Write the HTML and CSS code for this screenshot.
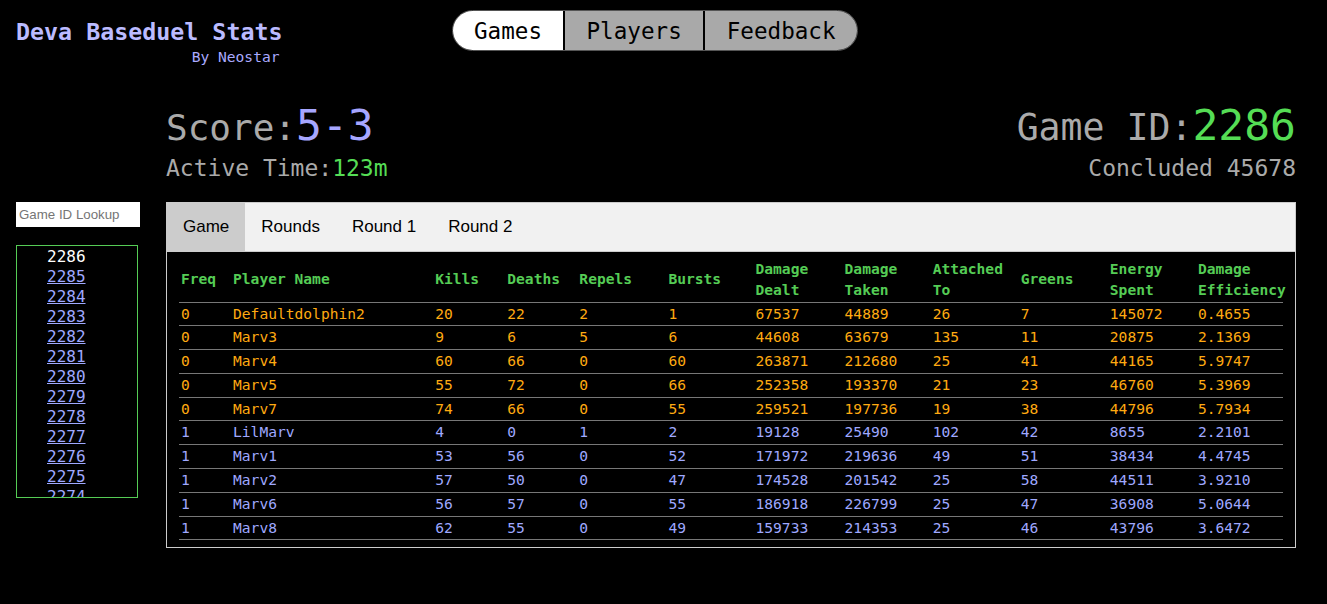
FILE: index.html
```html
<!DOCTYPE html>
<html lang="en">
<head>
<meta charset="utf-8">
<title>Deva Baseduel Stats</title>
<link rel="stylesheet" href="styles.css">
</head>
<body>
<header class="topbar">
  <div class="brand">
    <div class="brand-title">Deva Baseduel Stats</div>
    <div class="brand-sub">By Neostar</div>
  </div>
  <nav class="pill-nav">
    <button class="pill active">Games</button>
    <button class="pill">Players</button>
    <button class="pill">Feedback</button>
  </nav>
</header>

<main class="layout">
  <section class="summary">
    <div class="summary-left">
      <div class="big-line"><span class="label">Score:</span><span class="val-blue">5-3</span></div>
      <div class="small-line">Active Time:<span class="val-green">123m</span></div>
    </div>
    <div class="summary-right">
      <div class="big-line"><span class="label">Game ID:</span><span class="val-green">2286</span></div>
      <div class="small-line">Concluded 45678</div>
    </div>
  </section>

  <aside class="sidebar">
    <input class="lookup" type="text" placeholder="Game ID Lookup">
    <ul class="game-list">
      <li class="current">2286</li>
      <li><a href="#">2285</a></li>
      <li><a href="#">2284</a></li>
      <li><a href="#">2283</a></li>
      <li><a href="#">2282</a></li>
      <li><a href="#">2281</a></li>
      <li><a href="#">2280</a></li>
      <li><a href="#">2279</a></li>
      <li><a href="#">2278</a></li>
      <li><a href="#">2277</a></li>
      <li><a href="#">2276</a></li>
      <li><a href="#">2275</a></li>
      <li><a href="#">2274</a></li>
      <li><a href="#">2273</a></li>
      <li><a href="#">2272</a></li>
    </ul>
  </aside>

  <section class="panel">
    <div class="tabs">
      <button class="tab active">Game</button>
      <button class="tab">Rounds</button>
      <button class="tab">Round 1</button>
      <button class="tab">Round 2</button>
    </div>
    <div class="tab-content">
      <table class="stats">
        <thead>
          <tr>
            <th class="c-freq">Freq</th>
            <th class="c-name">Player Name</th>
            <th class="c-kills">Kills</th>
            <th class="c-deaths">Deaths</th>
            <th class="c-repels">Repels</th>
            <th class="c-bursts">Bursts</th>
            <th class="c-dealt">Damage Dealt</th>
            <th class="c-taken">Damage Taken</th>
            <th class="c-att">Attached To</th>
            <th class="c-greens">Greens</th>
            <th class="c-energy">Energy Spent</th>
            <th class="c-eff">Damage Efficiency</th>
          </tr>
        </thead>
        <tbody>
          <tr class="team0"><td>0</td><td>Defaultdolphin2</td><td>20</td><td>22</td><td>2</td><td>1</td><td>67537</td><td>44889</td><td>26</td><td>7</td><td>145072</td><td>0.4655</td></tr>
          <tr class="team0"><td>0</td><td>Marv3</td><td>9</td><td>6</td><td>5</td><td>6</td><td>44608</td><td>63679</td><td>135</td><td>11</td><td>20875</td><td>2.1369</td></tr>
          <tr class="team0"><td>0</td><td>Marv4</td><td>60</td><td>66</td><td>0</td><td>60</td><td>263871</td><td>212680</td><td>25</td><td>41</td><td>44165</td><td>5.9747</td></tr>
          <tr class="team0"><td>0</td><td>Marv5</td><td>55</td><td>72</td><td>0</td><td>66</td><td>252358</td><td>193370</td><td>21</td><td>23</td><td>46760</td><td>5.3969</td></tr>
          <tr class="team0"><td>0</td><td>Marv7</td><td>74</td><td>66</td><td>0</td><td>55</td><td>259521</td><td>197736</td><td>19</td><td>38</td><td>44796</td><td>5.7934</td></tr>
          <tr class="team1"><td>1</td><td>LilMarv</td><td>4</td><td>0</td><td>1</td><td>2</td><td>19128</td><td>25490</td><td>102</td><td>42</td><td>8655</td><td>2.2101</td></tr>
          <tr class="team1"><td>1</td><td>Marv1</td><td>53</td><td>56</td><td>0</td><td>52</td><td>171972</td><td>219636</td><td>49</td><td>51</td><td>38434</td><td>4.4745</td></tr>
          <tr class="team1"><td>1</td><td>Marv2</td><td>57</td><td>50</td><td>0</td><td>47</td><td>174528</td><td>201542</td><td>25</td><td>58</td><td>44511</td><td>3.9210</td></tr>
          <tr class="team1"><td>1</td><td>Marv6</td><td>56</td><td>57</td><td>0</td><td>55</td><td>186918</td><td>226799</td><td>25</td><td>47</td><td>36908</td><td>5.0644</td></tr>
          <tr class="team1"><td>1</td><td>Marv8</td><td>62</td><td>55</td><td>0</td><td>49</td><td>159733</td><td>214353</td><td>25</td><td>46</td><td>43796</td><td>3.6472</td></tr>
        </tbody>
      </table>
    </div>
  </section>
</main>
</body>
</html>
```

FILE: styles.css
```css
html, body {
  margin: 0;
  background: #000;
}

body {
  padding: 10px 31px 0 16px;
  font-family: "DejaVu Sans Mono", "Liberation Mono", monospace;
  color: #aaa;
}

/* ---------- header ---------- */
.topbar {
  display: flex;
  align-items: flex-start;
}

.brand {
  margin-top: 8px;
  text-align: right;
}

.brand-title {
  font-size: 23.3px;
  font-weight: bold;
  color: #bbbbff;
  line-height: 27px;
}

.brand-sub {
  margin-top: 3px;
  font-size: 14.6px;
  line-height: 17px;
  color: #aaaaff;
  padding-right: 3px;
}

.pill-nav {
  display: flex;
  margin-left: 169px;
  border: 1px solid #555;
  border-radius: 21px;
  overflow: hidden;
  background: #000;
}

.pill {
  box-sizing: content-box;
  height: 39px;
  padding: 0 21.5px;
  border: none;
  background: #a9a9a9;
  color: #000;
  font-family: "DejaVu Sans Mono", monospace;
  font-size: 22.6px;
  line-height: 41px;
  overflow: hidden;
}

.pill + .pill {
  border-left: 2px solid #000;
}

.pill.active {
  background: #fff;
  padding-right: 21px;
}

/* ---------- main layout ---------- */
.layout {
  display: grid;
  grid-template-columns: 150px 1fr;
  grid-template-rows: auto auto;
  margin-top: 35px;
}

.summary {
  grid-column: 2;
  grid-row: 1;
  display: flex;
  justify-content: space-between;
}

.summary-right {
  text-align: right;
}

.big-line {
  font-size: 43px;
  line-height: 50px;
  height: 50px;
}

.big-line .label {
  font-size: 36px;
  color: #aaa;
}

.summary-right .big-line .label {
  font-size: 36.5px;
}

.small-line {
  margin-top: 5px;
  font-size: 23px;
  line-height: 27px;
  color: #aaa;
}

.val-blue {
  color: #a6a6ff;
}

.val-green {
  color: #55dd55;
}

/* ---------- sidebar ---------- */
.sidebar {
  grid-column: 1;
  grid-row: 2;
  margin-top: 20px;
}

.lookup {
  display: block;
  box-sizing: border-box;
  width: 124px;
  height: 25px;
  border: none;
  padding: 2px 3px;
  background: #fff;
  font-family: "Liberation Sans", Arial, sans-serif;
  font-size: 13.3px;
  color: #000;
}

.lookup::placeholder {
  color: #757575;
}

.game-list {
  list-style: none;
  margin: 18px 0 0 0;
  padding: 1px 0 0 30px;
  box-sizing: border-box;
  width: 122px;
  height: 253px;
  border: 1px solid #55cc55;
  overflow: hidden;
  font-family: "DejaVu Sans Mono", monospace;
  font-size: 16px;
  line-height: 20px;
}

.game-list li.current {
  color: #fff;
}

.game-list a {
  color: #9fa8ff;
  text-decoration: underline;
}

/* ---------- panel ---------- */
.panel {
  grid-column: 2;
  grid-row: 2;
  margin-top: 20px;
}

.tabs {
  display: flex;
  border: 1px solid #ccc;
  background: #f1f1f1;
}

.tab {
  border: none;
  background: inherit;
  padding: 14px 16px;
  font-family: "Liberation Sans", Arial, sans-serif;
  font-size: 17px;
  line-height: 19.5px;
  color: #000;
}

.tab.active {
  background: #ccc;
}

.tab-content {
  border: 1px solid #ccc;
  border-top: none;
  padding: 5px 12px 7px;
}

.stats {
  width: 100%;
  border-collapse: collapse;
  font-family: "DejaVu Sans Mono", monospace;
  font-size: 14.6px;
  table-layout: fixed;
}

.stats th {
  text-align: left;
  vertical-align: middle;
  color: #55cc55;
  font-weight: bold;
  line-height: 21px;
  padding: 1px 2px 2px 2px;
  border-bottom: 1px solid #777;
}

.stats td {
  padding: 2px 2px;
  line-height: 18.8px;
  border-bottom: 1px solid #777;
  white-space: nowrap;
}

.c-freq { width: 52px; }
.c-name { width: 202px; }
.c-kills { width: 72px; }
.c-deaths { width: 72px; }
.c-repels { width: 89px; }
.c-bursts { width: 87px; }
.c-dealt { width: 89px; }
.c-taken { width: 88px; }
.c-att { width: 88px; }
.c-greens { width: 89px; }
.c-energy { width: 88px; }
.c-eff { width: 87px; }

.stats th, .stats td {
  box-sizing: border-box;
}

.team0 td {
  color: #ffaa11;
}

.team1 td {
  color: #9fa8ff;
}
```
